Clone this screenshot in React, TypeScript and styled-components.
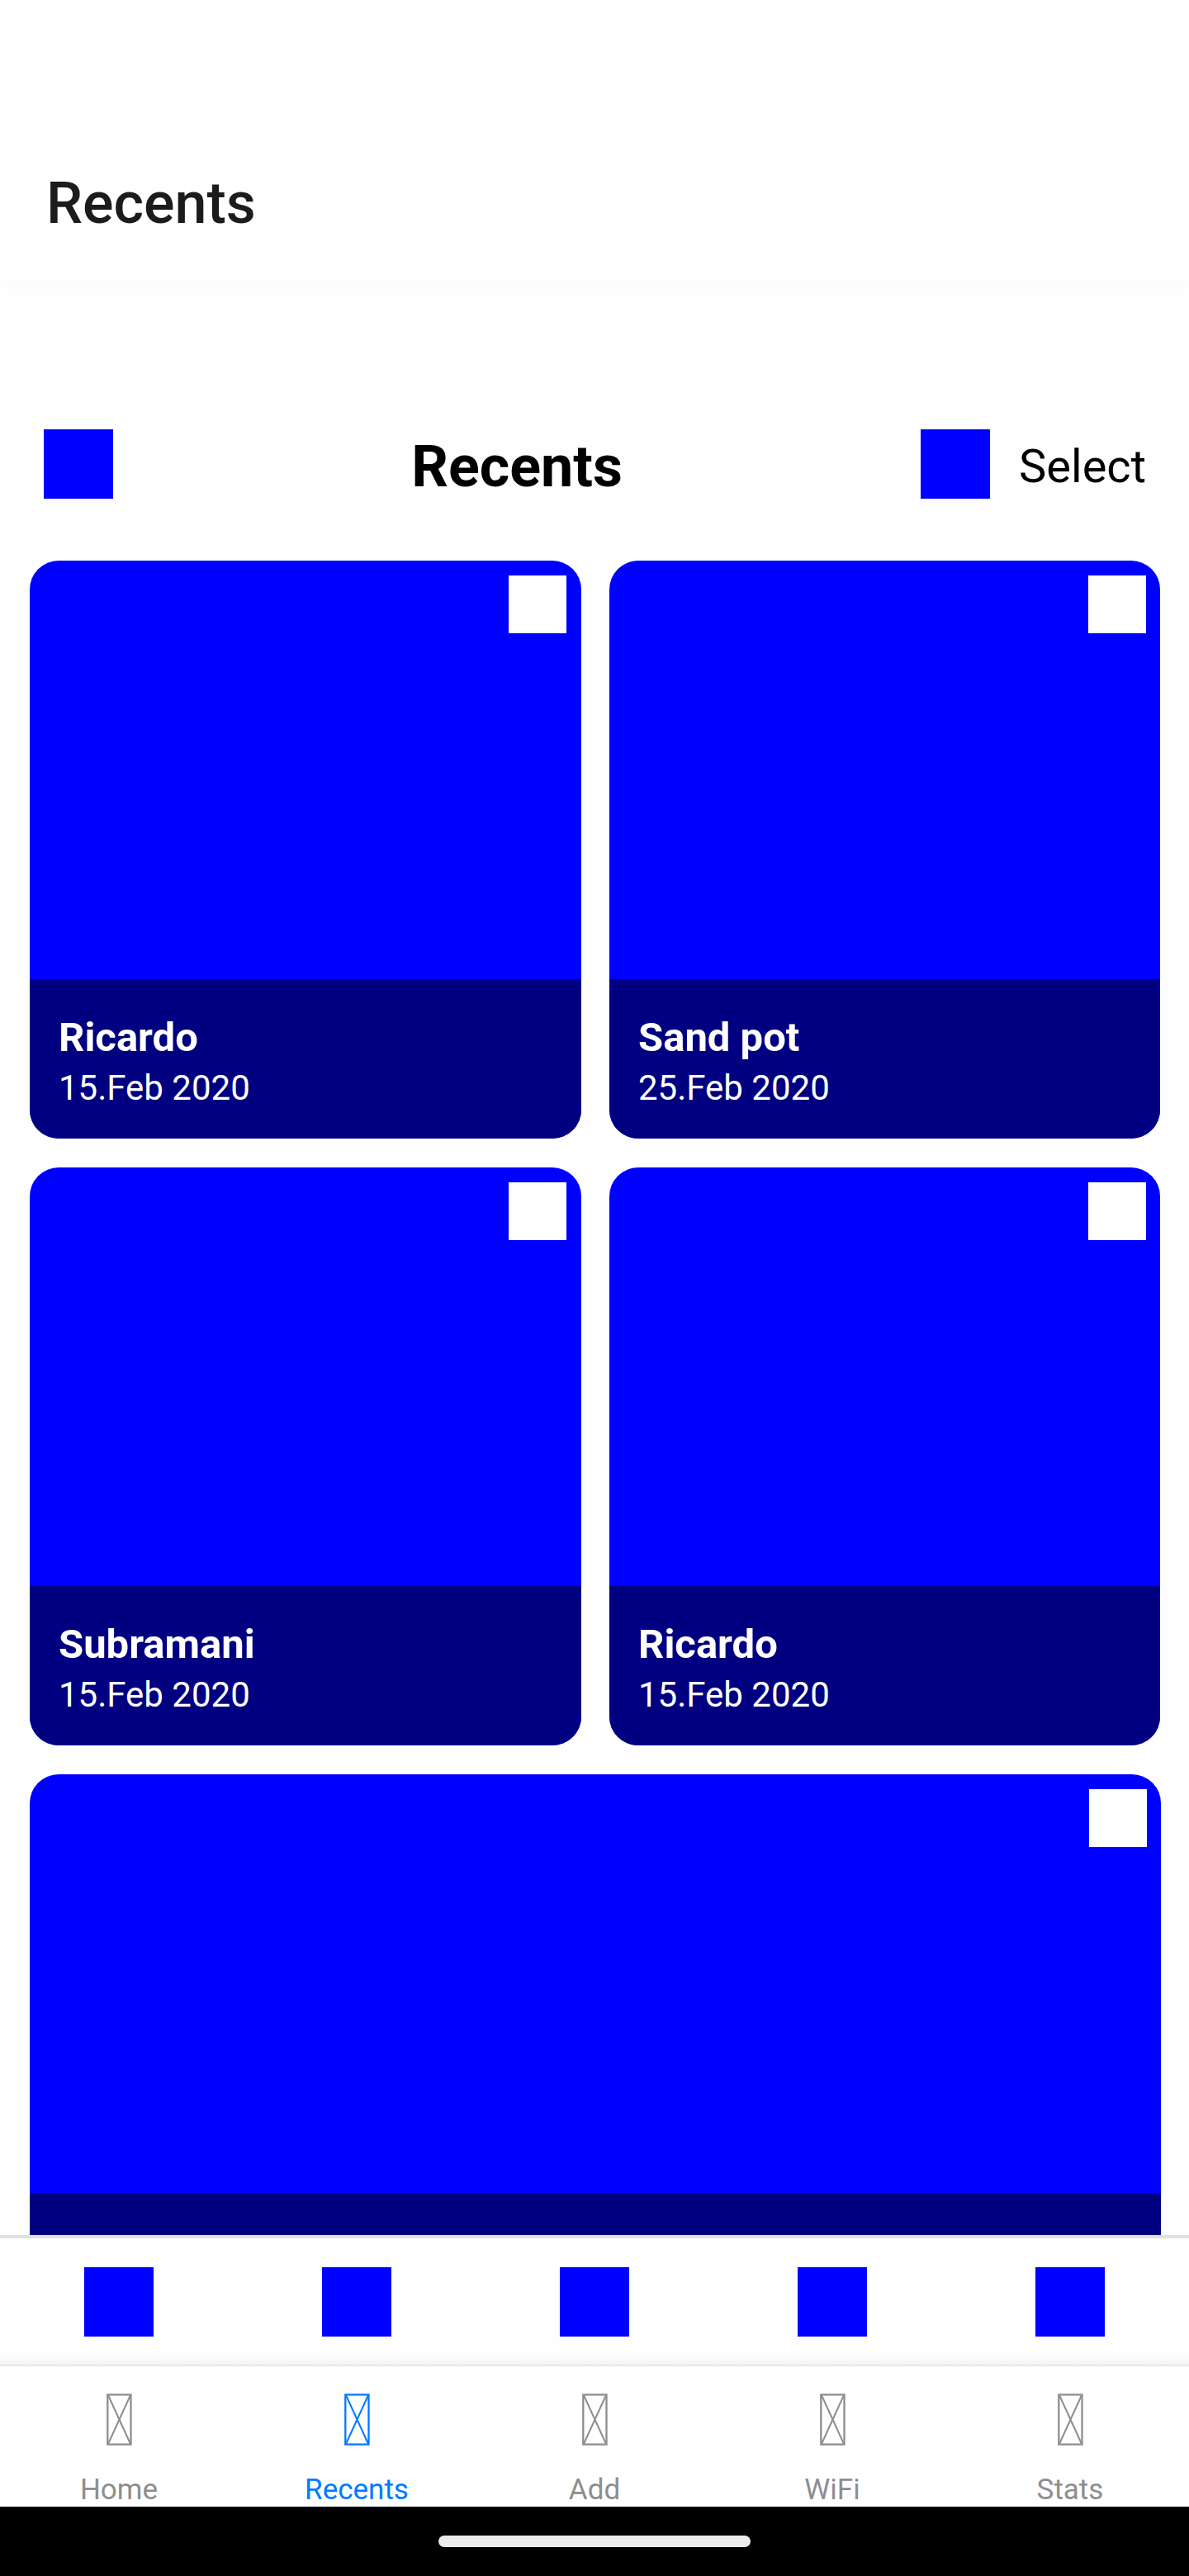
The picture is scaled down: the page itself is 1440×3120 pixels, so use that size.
import React from "react";
import styled, { createGlobalStyle, css } from "styled-components";

const GlobalStyle = createGlobalStyle`
  *, *::before, *::after { box-sizing: border-box; }
  body { margin: 0; background: #fefefe; font-family: Roboto, sans-serif; }
`;

const Screen = styled.div`
  display: flex;
  flex-direction: column;
  width: 1440px;
  height: 3120px;
  overflow: hidden;
  background: #fefefe;
`;

const NavHeader = styled.header`
  flex: none;
  display: flex;
  align-items: center;
  height: 340px;
  padding: 152px 56px 0;
  background: #fff;
  box-shadow: 0 2px 14px rgba(0, 0, 0, 0.03);
`;

const NavTitle = styled.h1`
  margin: 0;
  font-size: 70px;
  font-weight: 500;
  line-height: 82px;
  color: #1c1c1e;
`;

const Content = styled.main`
  flex: 1;
  min-height: 0;
  display: flex;
  flex-direction: column;
  overflow: hidden;
`;

const Toolbar = styled.div`
  flex: none;
  display: flex;
  justify-content: space-between;
  align-items: center;
  height: 84px;
  margin: 180px 52px 75px 53px;
`;

const Heading = styled.h2`
  margin: 6px 0 0;
  font-size: 70px;
  font-weight: 700;
  line-height: 82px;
  color: #000;
`;

const Actions = styled.div`
  display: flex;
  align-items: center;
  justify-content: flex-end;
  gap: 35px;
`;

const SelectButton = styled.button`
  margin: 5px 0 0;
  padding: 0;
  border: 0;
  background: none;
  font: 400 56px/66px Roboto, sans-serif;
  color: #000;
`;

const IconBlock = styled.span`
  flex: none;
  width: 84px;
  height: 84px;
  background: #00f;
`;

const Gallery = styled.div`
  flex: none;
  display: grid;
  grid-template-columns: 668px 667px 1px;
  column-gap: 34px;
  row-gap: 35px;
  padding-left: 36px;
`;

const Checkbox = styled.span`
  width: 70px;
  height: 70px;
  margin: 18px 17px 0 0;
  background: #fff;
`;

const Card = styled.article<{ $wide?: boolean }>`
  display: flex;
  flex-direction: column;
  justify-content: space-between;
  align-items: flex-end;
  height: 700px;
  border-radius: 35px;
  overflow: hidden;
  background: #00f;

  &:nth-child(odd) {
    grid-column: 1;
  }
  &:nth-child(odd) > ${Checkbox} {
    margin-right: 18px;
  }
  ${(p) =>
    p.$wide &&
    css`
      && {
        grid-column: 1 / span 2;
        width: 1370px;
      }
      &&& > ${Checkbox} {
        margin-right: 17px;
      }
    `}
`;

const Caption = styled.div`
  width: 100%;
  height: 193px;
  padding: 42px 35px 0;
  background: #000080;
  color: #fff;
`;

const Name = styled.div`
  font-size: 49px;
  font-weight: 700;
  line-height: 58px;
`;

const DateText = styled.div`
  margin-top: 7px;
  font-size: 42px;
  line-height: 49px;
`;

const ActionBar = styled.div`
  flex: none;
  display: flex;
  height: 157px;
  padding-top: 35px;
  border-top: 4px solid #e0e0e0;
  background: linear-gradient(#fefefe 138px, #f5f5f5 153px);
`;

const ActionSlot = styled.div`
  flex: 1;
  display: flex;
  justify-content: center;
`;

const TabBar = styled.nav`
  flex: none;
  display: flex;
  height: 172px;
  border-top: 2px solid #e8e8e8;
  background: #fff;
`;

const Tab = styled.a<{ $active?: boolean }>`
  flex: 1;
  display: flex;
  flex-direction: column;
  align-items: center;
  padding-top: 33px;
  color: #8e8e8f;
  ${(p) =>
    p.$active &&
    css`
      color: #007aff;
    `}
`;

const TabIcon = styled.svg`
  flex: none;
  width: 31px;
  height: 63px;
  margin-left: 1px;
`;

const TabLabel = styled.span`
  margin-top: 33px;
  font-size: 35px;
  line-height: 41px;
`;

const SystemBar = styled.footer`
  flex: none;
  display: flex;
  justify-content: center;
  height: 84px;
  padding-top: 35px;
  background: #000;
`;

const HomePill = styled.span`
  width: 378px;
  height: 14px;
  border-radius: 7px;
  background: #ebebeb;
`;

const MissingGlyph = () => (
  <TabIcon viewBox="0 0 31 63" fill="none" stroke="currentColor">
    <rect x="1.3" y="1.4" width="28.2" height="60.2" strokeWidth="2.3" />
    <path d="M2 2 L29 61 M29 2 L2 61" strokeWidth="2" />
  </TabIcon>
);

type Photo = { name: string; date?: string; wide?: boolean };

const photos: Photo[] = [
  { name: "Ricardo", date: "15.Feb 2020" },
  { name: "Sand pot", date: "25.Feb 2020" },
  { name: "Subramani", date: "15.Feb 2020" },
  { name: "Ricardo", date: "15.Feb 2020" },
  { name: "Subramani", wide: true },
];

const tabs = ["Home", "Recents", "Add", "WiFi", "Stats"];

export default function App() {
  return (
    <Screen>
      <GlobalStyle />
      <NavHeader>
        <NavTitle>Recents</NavTitle>
      </NavHeader>
      <Content>
        <Toolbar>
          <IconBlock />
          <Heading>Recents</Heading>
          <Actions>
            <IconBlock />
            <SelectButton>Select</SelectButton>
          </Actions>
        </Toolbar>
        <Gallery>
          {photos.map((p, i) => (
            <Card key={i} $wide={p.wide}>
              <Checkbox />
              <Caption>
                <Name>{p.name}</Name>
                {p.date && <DateText>{p.date}</DateText>}
              </Caption>
            </Card>
          ))}
        </Gallery>
      </Content>
      <ActionBar>
        {tabs.map((t) => (
          <ActionSlot key={t}>
            <IconBlock />
          </ActionSlot>
        ))}
      </ActionBar>
      <TabBar>
        {tabs.map((t) => (
          <Tab key={t} $active={t === "Recents"}>
            <MissingGlyph />
            <TabLabel>{t}</TabLabel>
          </Tab>
        ))}
      </TabBar>
      <SystemBar>
        <HomePill />
      </SystemBar>
    </Screen>
  );
}
